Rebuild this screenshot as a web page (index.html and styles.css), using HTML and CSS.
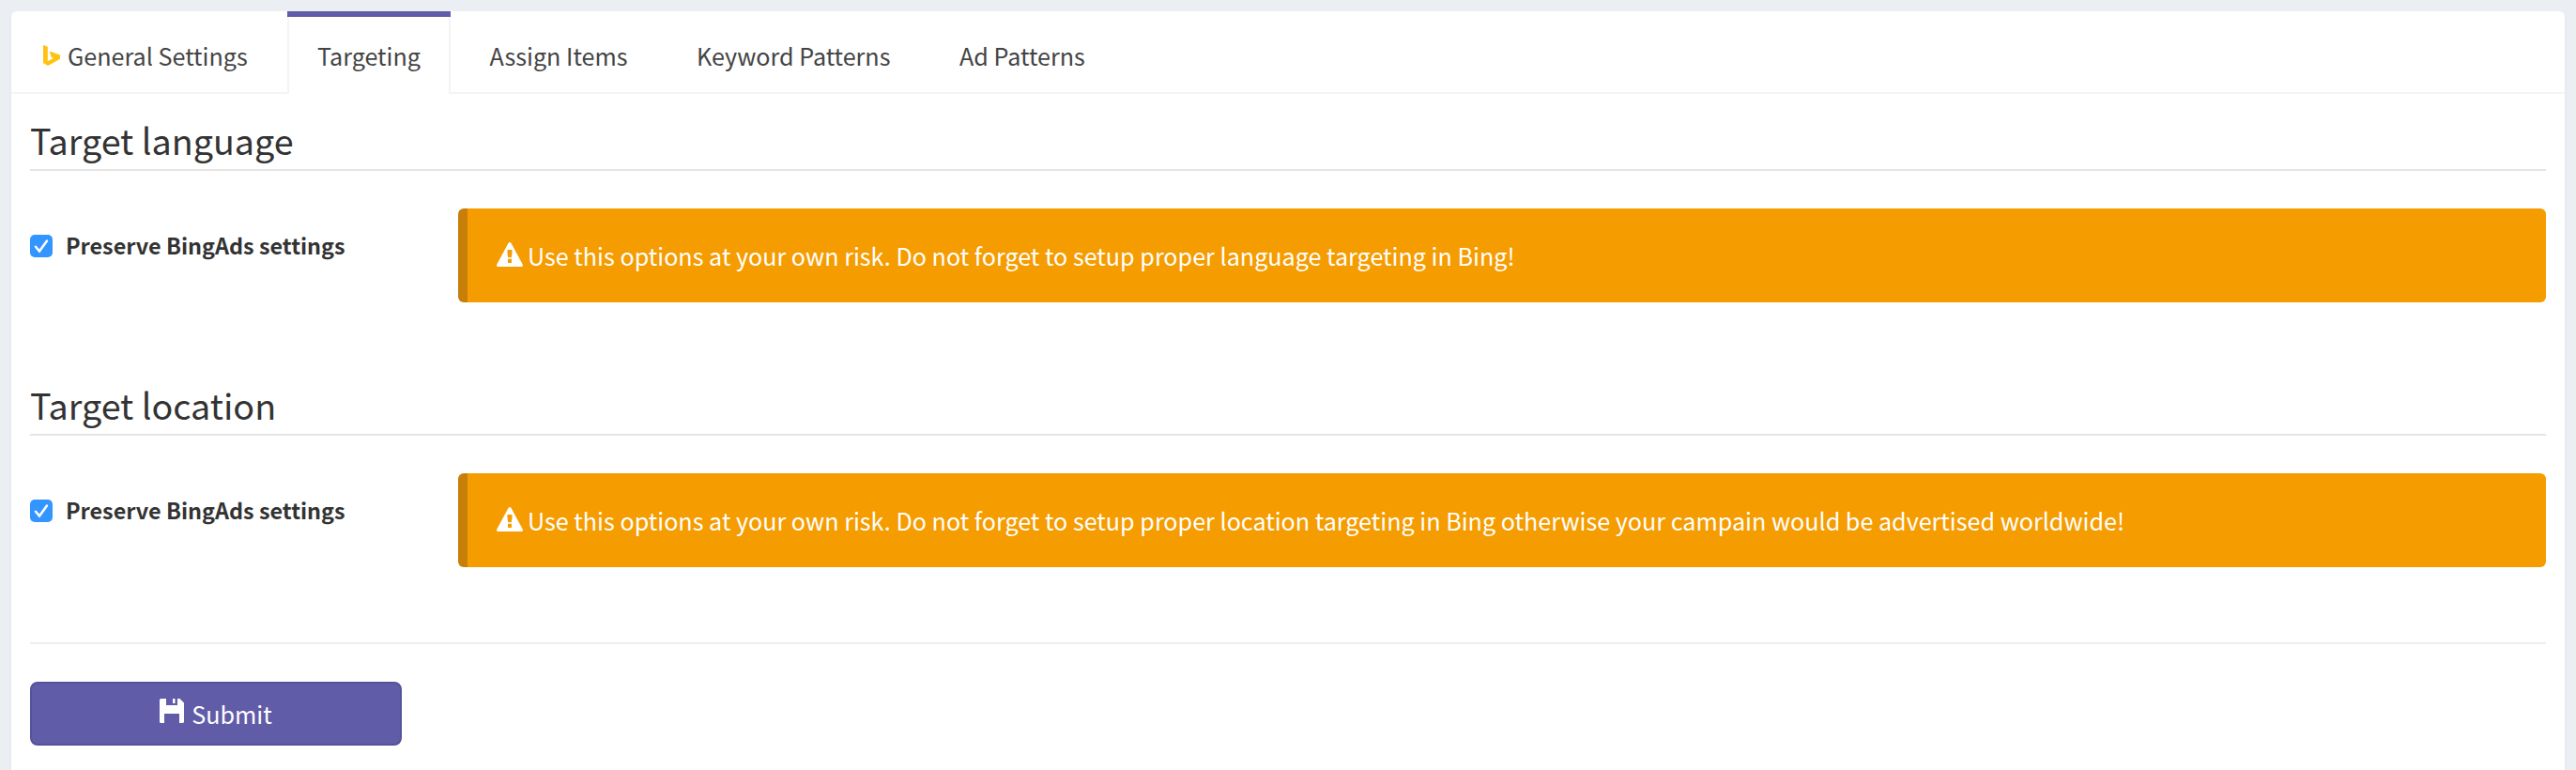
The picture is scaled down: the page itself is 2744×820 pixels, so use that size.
FILE: index.html
```html
<!DOCTYPE html>
<html lang="en">
<head>
<meta charset="utf-8">
<title>Targeting</title>
<link rel="stylesheet" href="styles.css">
</head>
<body>
<main class="card">
  <nav class="tabs">
    <a class="tab tab-general"><svg class="bing" viewBox="0 0 18 22"><path fill="#ffc20e" d="M0 0L4.800 1.700V17.300L10.800 14L8.400 12.500L6.900 6.500L18 10.500V14.800L5 22L0 19Z"/></svg><span>General Settings</span></a>
    <a class="tab tab-active"><span>Targeting</span></a>
    <a class="tab"><span>Assign Items</span></a>
    <a class="tab"><span>Keyword Patterns</span></a>
    <a class="tab"><span>Ad Patterns</span></a>
  </nav>
  <form class="content">
    <section class="section">
      <h2 class="heading">Target language</h2>
      <div class="row">
        <label class="option"><svg class="check" viewBox="0 0 24 24"><rect width="24" height="24" rx="5" fill="#3395ff"/><path d="M6 12.800L10 17.500L18 6.500" fill="none" stroke="#fff" stroke-width="2.500" stroke-linecap="round"/></svg><span>Preserve BingAds settings</span></label>
        <div class="alert"><svg class="warn" viewBox="0 0 28 26"><path fill="#fff" fill-rule="evenodd" d="M14 0Q15 0 15.800 1.400L27.700 23.500Q28.500 26 26.500 26H1.500Q-.5 26 .3 23.500L12.200 1.400Q13 0 14 0ZM11.500 8V12L12.300 16.200H15.700L16.500 12V8ZM12 17.800V22H16V17.800Z"/></svg><span>Use this options at your own risk. Do not forget to setup proper language targeting in Bing!</span></div>
      </div>
    </section>
    <section class="section">
      <h2 class="heading">Target location</h2>
      <div class="row">
        <label class="option"><svg class="check" viewBox="0 0 24 24"><rect width="24" height="24" rx="5" fill="#3395ff"/><path d="M6 12.800L10 17.500L18 6.500" fill="none" stroke="#fff" stroke-width="2.500" stroke-linecap="round"/></svg><span>Preserve BingAds settings</span></label>
        <div class="alert"><svg class="warn" viewBox="0 0 28 26"><path fill="#fff" fill-rule="evenodd" d="M14 0Q15 0 15.800 1.400L27.700 23.500Q28.500 26 26.500 26H1.500Q-.5 26 .3 23.500L12.200 1.400Q13 0 14 0ZM11.500 8V12L12.300 16.200H15.700L16.500 12V8ZM12 17.800V22H16V17.800Z"/></svg><span>Use this options at your own risk. Do not forget to setup proper location targeting in Bing otherwise your campain would be advertised worldwide!</span></div>
      </div>
    </section>
    <hr class="rule">
    <button class="submit" type="button"><svg class="save" viewBox="0 0 26 26"><path fill="#fff" fill-rule="evenodd" d="M1 0H7V7H19V0H21.500L26 4.500V25L25 26H21V16H5V26H1L0 25V1ZM14 0H16.500V5H14Z"/></svg><span>Submit</span></button>
  </form>
</main>
</body>
</html>
```

FILE: styles.css
```css
* { box-sizing: border-box; }
body {
  margin: 0;
  padding: 12px 12px 0;
  height: 820px;
  overflow: hidden;
  background: #ebeef3;
  color: #333;
  font-family: "Noto Sans CJK SC", "Noto Sans CJK JP", sans-serif;
  font-size: 25.15px;
  line-height: 40px;
}
.card {
  height: 840px;
  background: #fff;
  border-radius: 6px;
  box-shadow: 0 2px 2px rgba(0, 0, 0, .1);
}
.tabs {
  display: flex;
  height: 88px;
  border-bottom: 2px solid #f4f4f4;
  color: #444;
}
.tab {
  display: flex;
  height: 88px;
  margin-right: 10px;
  padding: 21px 32px 0 31.5px;
  border-top: 6px solid transparent;
  white-space: nowrap;
}
.tab-general { width: 284px; padding-left: 34px; padding-right: 0; }
.tab-active {
  width: 174px;
  padding: 0;
  background: #fff;
  border-top-color: #605ca8;
}
.tab-active span {
  width: 100%;
  padding: 21px 0 0 30px;
  border-left: 2px solid #f4f4f4;
  border-right: 2px solid #f4f4f4;
}
.bing { width: 18px; height: 22px; margin: 9px 8px 0 0; }
.content { padding: 20px 20px 0; }
.section { height: 282px; }
.heading {
  margin: 0;
  height: 62px;
  font-size: 37.7px;
  font-weight: 400;
  line-height: 57px;
  border-bottom: 2px solid #e5e5e5;
}
.row {
  display: flex;
  padding-top: 40px;
}
.option {
  display: flex;
  width: 456px;
  padding-top: 19px;
  font-weight: 700;
  font-size: 23.4px;
  white-space: nowrap;
}
.check { width: 24px; height: 24px; margin: 9px 14px 0 0; }
.alert {
  display: flex;
  flex: 1;
  height: 100px;
  padding: 30px 30px 0;
  border-left: 10px solid #c87f0a;
  border-radius: 6px;
  background: #f59c00;
  color: #fff;
  white-space: nowrap;
}
.warn { width: 28px; height: 26px; margin: 6px 5px 0 1px; }
.rule { margin: 0; height: 2px; border: 0; background: #eee; }
.submit {
  display: flex;
  justify-content: center;
  width: 396px;
  height: 68px;
  margin-top: 40px;
  padding: 12px 0 0;
  border: 2px solid #555299;
  border-radius: 8px;
  background: #605ca8;
  color: #fff;
  font: inherit;
}
.save { width: 26px; height: 26px; margin: 4px 8px 0 0; }
```
